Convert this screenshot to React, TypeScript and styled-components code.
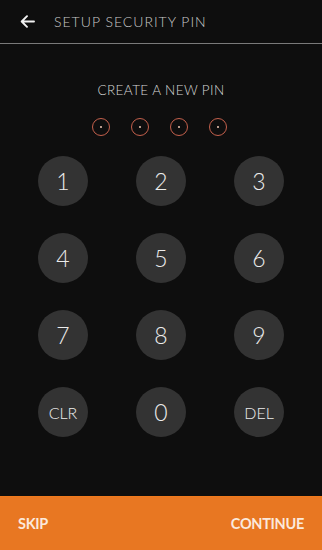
import React from 'react';
import styled, { createGlobalStyle } from 'styled-components';

const GlobalStyle = createGlobalStyle`
  * {
    margin: 0;
    padding: 0;
    box-sizing: border-box;
  }

  html, body, #root {
    height: 100%;
  }

  body {
    font-family: 'Lato', 'Open Sans', sans-serif;
    background-color: #0e0e0e;
    color: #e6e6e6;
    -webkit-font-smoothing: antialiased;
  }
`;

const keys = ['1', '2', '3', '4', '5', '6', '7', '8', '9', 'CLR', '0', 'DEL'];

const App: React.FC = () => {
  return (
    <>
      <GlobalStyle />
      <Screen>
        <Header>
          <BackButton aria-label="Back">
            <svg width="15" height="13" viewBox="0 0 15 13" fill="none">
              <path
                d="M14 6.5H2M7 1.2L1.7 6.5L7 11.8"
                stroke="#f2f2f2"
                strokeWidth="1.9"
                strokeLinecap="round"
                strokeLinejoin="round"
              />
            </svg>
          </BackButton>
          <Title>SETUP SECURITY PIN</Title>
        </Header>

        <Content>
          <Prompt>CREATE A NEW PIN</Prompt>
          <Dots>
            {[0, 1, 2, 3].map((i) => (
              <Dot key={i} />
            ))}
          </Dots>

          <Keypad>
            {keys.map((k) => (
              <KeyCell key={k}>
                <Key $small={k.length > 1}>{k}</Key>
              </KeyCell>
            ))}
          </Keypad>
        </Content>

        <Footer>
          <FooterButton>SKIP</FooterButton>
          <FooterButton>CONTINUE</FooterButton>
        </Footer>
      </Screen>
    </>
  );
};

const Screen = styled.div`
  height: 100%;
  display: flex;
  flex-direction: column;
  background: #0e0e0e;
`;

const Header = styled.header`
  height: 44px;
  display: flex;
  align-items: center;
  padding: 0 0 0 20px;
  border-bottom: 1px solid #7a7a7a;
`;

const BackButton = styled.button`
  background: none;
  border: none;
  display: flex;
  align-items: center;
  width: 15px;
  height: 20px;
  margin-right: 19px;
  cursor: pointer;
`;

const Title = styled.h1`
  font-size: 14px;
  font-weight: 300;
  letter-spacing: 1px;
  color: #c8c8c8;
`;

const Content = styled.main`
  flex: 1;
  display: flex;
  flex-direction: column;
  align-items: center;
  padding-top: 38px;
`;

const Prompt = styled.h2`
  font-size: 13.5px;
  font-weight: 300;
  letter-spacing: 0.4px;
  color: #d6d6d6;
  line-height: 16px;
`;

const Dots = styled.div`
  display: flex;
  gap: 21px;
  margin-top: 20px;
  margin-left: -3px;
`;

const Dot = styled.span`
  width: 18px;
  height: 18px;
  border-radius: 50%;
  border: 1.5px solid #c4604c;
  display: flex;
  align-items: center;
  justify-content: center;

  &::after {
    content: '';
    width: 2.5px;
    height: 2.5px;
    border-radius: 50%;
    background: #f0c8b4;
  }
`;

const Keypad = styled.div`
  width: 294px;
  display: grid;
  grid-template-columns: repeat(3, 1fr);
  row-gap: 27px;
  margin-top: 20px;
`;

const KeyCell = styled.div`
  display: flex;
  justify-content: center;
`;

const Key = styled.button<{ $small?: boolean }>`
  width: 50px;
  height: 50px;
  border-radius: 50%;
  border: none;
  background: #333333;
  color: #ececec;
  font-family: 'Lato', 'Open Sans', sans-serif;
  font-size: ${({ $small }) => ($small ? '16px' : '23px')};
  font-weight: 300;
  display: flex;
  align-items: center;
  justify-content: center;
  cursor: pointer;
`;

const Footer = styled.footer`
  height: 54px;
  background: #e87722;
  border-top: 1px solid #f07a1c;
  display: flex;
  align-items: center;
  justify-content: space-between;
  padding: 0 18px;
`;

const FooterButton = styled.button`
  background: none;
  border: none;
  color: #fbe9dc;
  font-family: 'Lato', 'Open Sans', sans-serif;
  font-size: 14.5px;
  font-weight: 700;
  letter-spacing: -0.3px;
  cursor: pointer;
`;

export default App;
